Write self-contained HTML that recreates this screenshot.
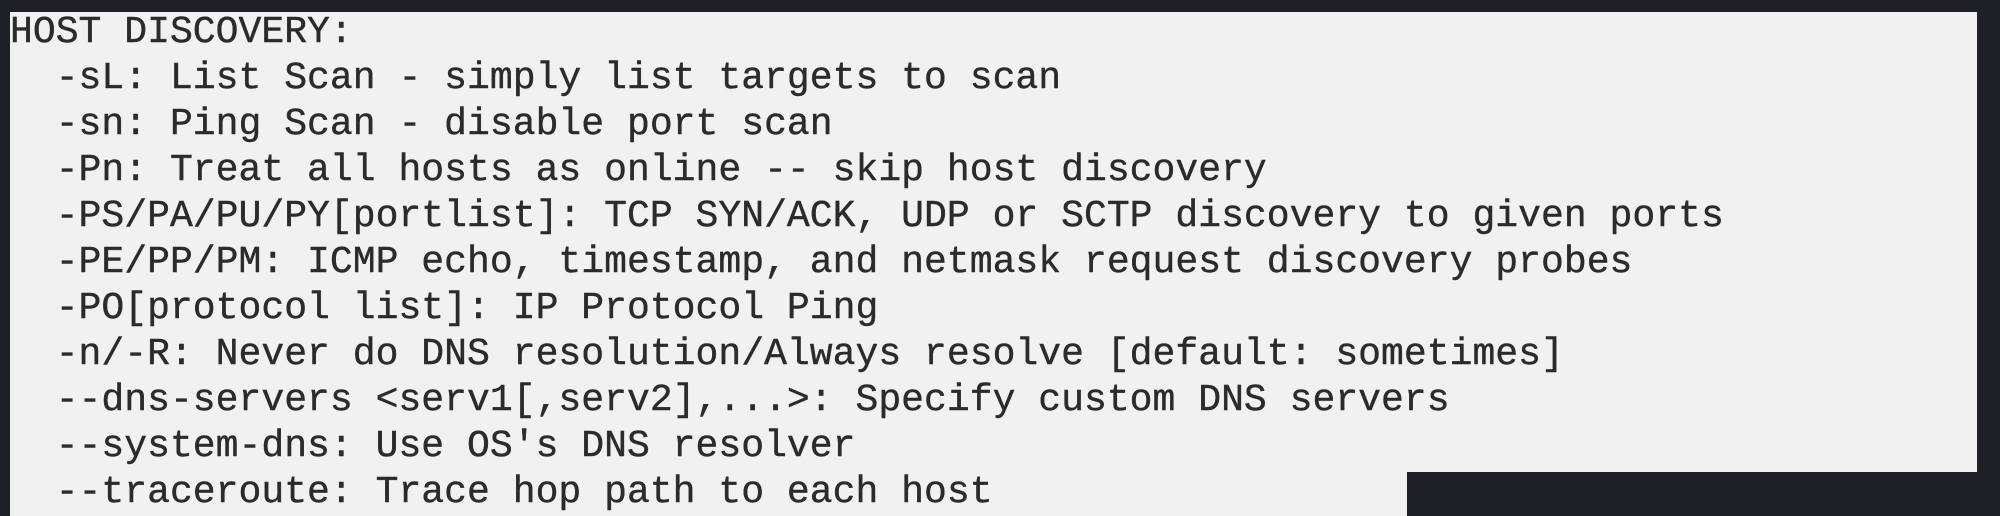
<!DOCTYPE html>
<html><head><style>
html,body{margin:0;padding:0;width:2000px;height:516px;overflow:hidden;background:#1f1f27;}
#p{position:absolute;left:10px;top:12px;width:1967px;height:504px;background:#f1f1f1;}
#d{position:absolute;left:1407px;top:472px;width:593px;height:44px;background:#1f1f27;}
pre{position:absolute;left:10px;top:10px;margin:0;font-family:"Liberation Mono",monospace;font-size:38.1px;line-height:46px;color:#2b2b2b;-webkit-text-stroke:0.4px #2b2b2b;}
</style></head><body>
<div id="p"></div><div id="d"></div>
<pre>HOST DISCOVERY:
  -sL: List Scan - simply list targets to scan
  -sn: Ping Scan - disable port scan
  -Pn: Treat all hosts as online -- skip host discovery
  -PS/PA/PU/PY[portlist]: TCP SYN/ACK, UDP or SCTP discovery to given ports
  -PE/PP/PM: ICMP echo, timestamp, and netmask request discovery probes
  -PO[protocol list]: IP Protocol Ping
  -n/-R: Never do DNS resolution/Always resolve [default: sometimes]
  --dns-servers &lt;serv1[,serv2],...&gt;: Specify custom DNS servers
  --system-dns: Use OS's DNS resolver
  --traceroute: Trace hop path to each host</pre>
</body></html>
